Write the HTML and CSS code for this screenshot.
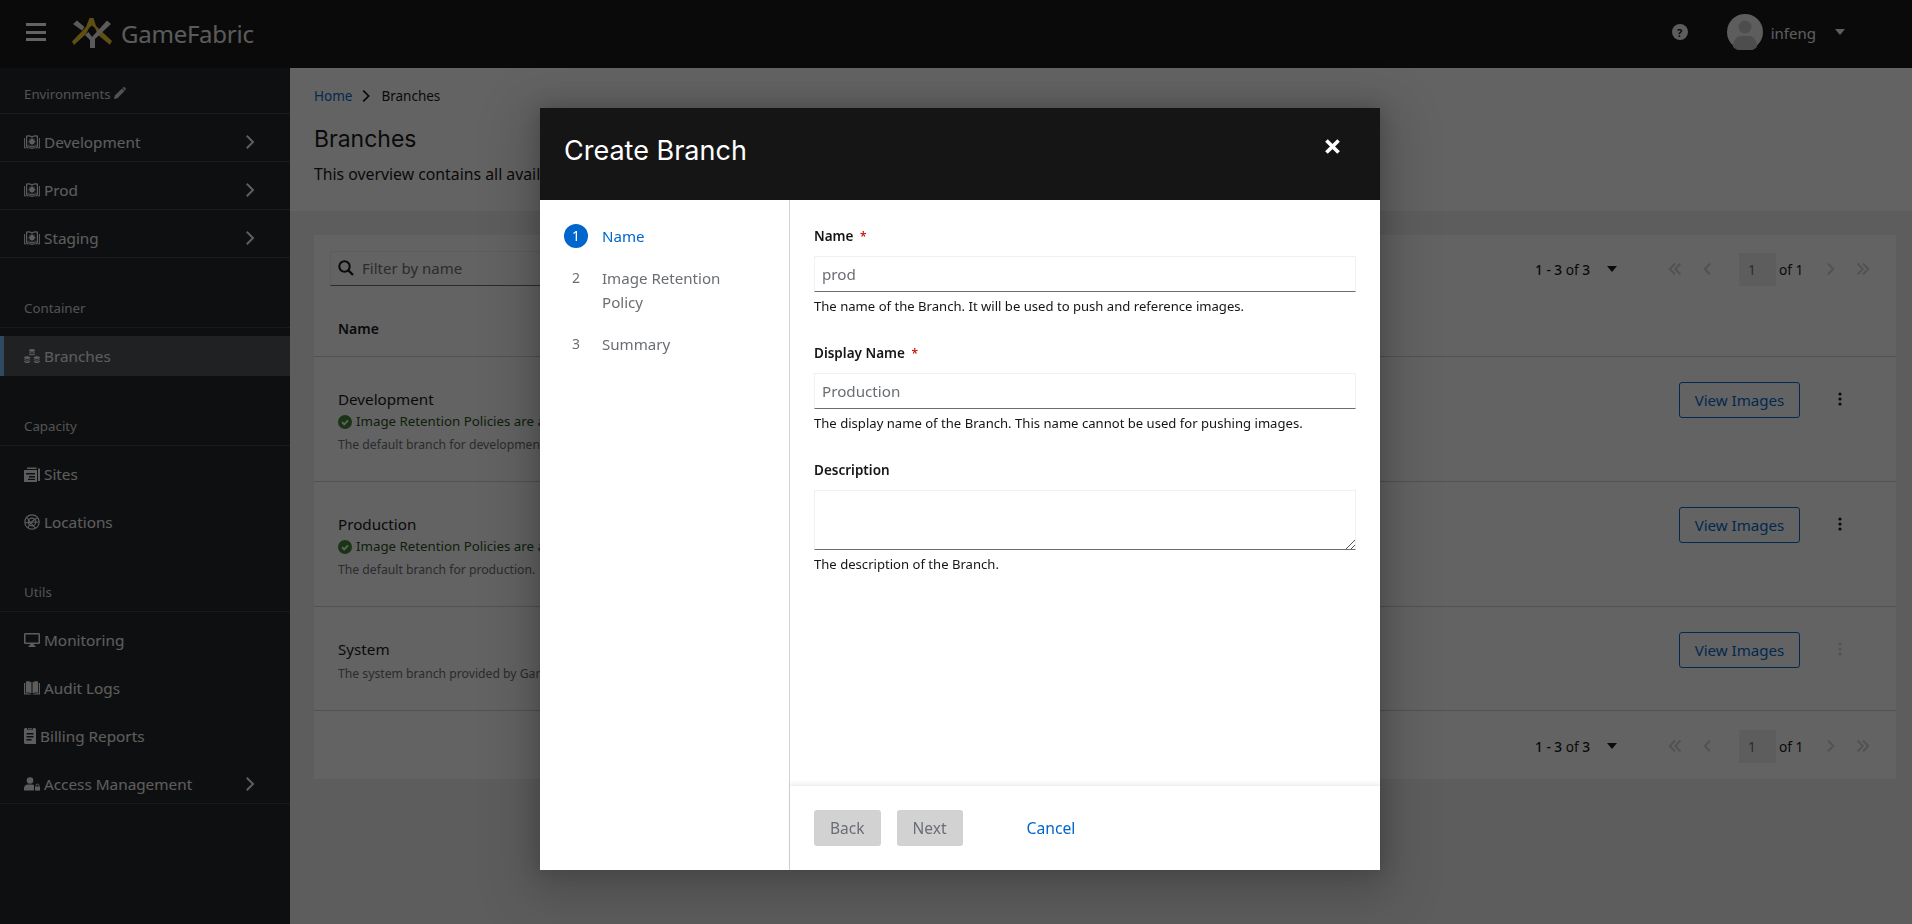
FILE: index.html
```html
<!DOCTYPE html>
<html lang="en">
<head>
<meta charset="utf-8">
<title>Branches - GameFabric</title>
<link rel="stylesheet" href="styles.css">
</head>
<body>
<svg class="defs" width="0" height="0" aria-hidden="true">
  <symbol id="i-env" viewBox="0 0 16 14">
    <path fill="none" stroke="currentColor" stroke-width="1.2" d="M2.6 1.2c1.8-.5 3.8-.3 5.4.9 1.6-1.2 3.6-1.4 5.4-.9v10c-1.8-.4-3.8-.2-5.4.8-1.6-1-3.6-1.2-5.4-.8z"/>
    <path fill="none" stroke="currentColor" stroke-width="1" d="M.6 3v10c2.5-.5 5-.3 7.4.4 2.4-.7 4.9-.9 7.4-.4V3"/>
    <circle cx="8" cy="6.6" r="2.6" fill="currentColor"/>
    <path stroke="currentColor" stroke-width="1" d="M8 2.8v7.600M4.400 6.600h7.200M5.400 4l5.200 5.200M10.600 4L5.400 9.200"/>
  </symbol>
  <symbol id="i-cubes" viewBox="0 0 16 14">
    <path fill="currentColor" d="M8 0c1.700 0 3 .6 3 1.300v3.600C11 5.600 9.700 6.200 8 6.200S5 5.600 5 4.900V1.300C5 .6 6.300 0 8 0zM3.200 7.200c1.700 0 3 .6 3 1.300v3.900c0 .9-1.300 1.500-3 1.500s-3-.6-3-1.500V8.500c0-.7 1.300-1.300 3-1.300zM12.800 7.200c1.700 0 3 .6 3 1.300v3.900c0 .9-1.300 1.500-3 1.500s-3-.6-3-1.500V8.500c0-.7 1.300-1.300 3-1.300z"/>
    <path fill="none" stroke="#212427" stroke-width=".7" d="M5 2.500c1.500 1 4.500 1 6 0M5 4c1.500 1 4.500 1 6 0M.2 9.700c1.500 1 4.500 1 6 0M.2 11.300c1.500 1 4.500 1 6 0M9.800 9.700c1.500 1 4.500 1 6 0M9.800 11.300c1.500 1 4.500 1 6 0"/>
  </symbol>
  <symbol id="i-sites" viewBox="0 0 16 16">
    <path fill="currentColor" d="M3 1.500h9.500V3H3zM14 2.500h2V15h-2zM0 4h13v12H0zM2 7v1.500h9V7zm3 3v1.500h6V10zm-1 2.700v1.300h7v-1.300z" fill-rule="evenodd"/>
  </symbol>
  <symbol id="i-loc" viewBox="0 0 16 16">
    <g fill="none" stroke="currentColor" stroke-width="1.200"><circle cx="8" cy="8" r="7.200"/><circle cx="8" cy="8" r="3.800"/><path d="M3 3.500c2 3 6 8.500 9 11M13.500 4C11 5 6 8 4 14M1 9c4-1 9-1 13.800-1"/></g>
  </symbol>
  <symbol id="i-desktop" viewBox="0 0 16 14">
    <path fill="currentColor" fill-rule="evenodd" d="M1.300 0h13.400c.7 0 1.300.6 1.300 1.300v8.400c0 .7-.6 1.300-1.300 1.300h-5l.4 1.500h1.400v1.500H4.500v-1.500h1.400l.4-1.500h-5C.6 11 0 10.400 0 9.700V1.300C0 .6.600 0 1.300 0zM1.500 1.500v8h13v-8z"/>
  </symbol>
  <symbol id="i-book" viewBox="0 0 16 14">
    <path fill="currentColor" d="M2 .3c2-.4 4.300-.1 5.500 1v11.200c-1.400-.9-3.500-1.100-5.500-.8zM14 .3c-2-.4-4.300-.1-5.500 1v11.200c1.400-.9 3.500-1.100 5.500-.8zM0 2h1.200v10.500c2-.3 4-.2 6 .7v.3H0zM16 2h-1.200v10.500c-2-.3-4-.2-6 .7v.3H16z"/>
  </symbol>
  <symbol id="i-file" viewBox="0 0 12 16">
    <path fill="currentColor" fill-rule="evenodd" d="M0 1.500C0 .7.700 0 1.500 0H3v1.500h6V0h1.500c.8 0 1.500.7 1.500 1.500V16H1.500C.7 16 0 15.300 0 14.500zM2.500 5v1.400h7V5zm0 3v1.400h7V8zm0 3v1.400h5V11zM4 0h4v.8H4z"/>
  </symbol>
  <symbol id="i-user" viewBox="0 0 16 14">
    <circle cx="6" cy="3.500" r="3.300" fill="currentColor"/>
    <path fill="currentColor" d="M0 13.600v-2C0 9 1.800 7.500 4 7.500h4c1 0 1.600.2 2 .5v5.600z"/>
    <path fill="currentColor" d="M11 9.500h5v4.100h-5z"/>
    <path fill="none" stroke="currentColor" stroke-width="1" d="M12.100 9.500V8.300c0-1.600 2.800-1.600 2.800 0v1.200"/>
  </symbol>
  <symbol id="i-angle" viewBox="0 0 10 16">
    <path fill="none" stroke="currentColor" stroke-width="2" stroke-linecap="square" d="M2.500 2.500L8 8l-5.500 5.500"/>
  </symbol>
  <symbol id="i-kebab" viewBox="0 0 4 14">
    <circle cx="2" cy="2" r="1.600" fill="currentColor"/><circle cx="2" cy="7" r="1.600" fill="currentColor"/><circle cx="2" cy="12" r="1.600" fill="currentColor"/>
  </symbol>
  <symbol id="i-first" viewBox="0 0 14 14">
    <path fill="none" stroke="currentColor" stroke-width="2" d="M7 1.500L1.800 7 7 12.500M12.500 1.500L7.300 7l5.200 5.500"/>
  </symbol>
  <symbol id="i-prev" viewBox="0 0 14 14">
    <path fill="none" stroke="currentColor" stroke-width="2" d="M10 1.500L4.800 7l5.200 5.500"/>
  </symbol>
  <symbol id="i-next" viewBox="0 0 14 14">
    <path fill="none" stroke="currentColor" stroke-width="2" d="M4 1.500L9.200 7 4 12.500"/>
  </symbol>
  <symbol id="i-last" viewBox="0 0 14 14">
    <path fill="none" stroke="currentColor" stroke-width="2" d="M1.500 1.500L6.700 7l-5.200 5.500M7 1.500L12.200 7 7 12.500"/>
  </symbol>
  <symbol id="i-check" viewBox="0 0 14 14">
    <circle cx="7" cy="7" r="7" fill="currentColor"/>
    <path fill="none" stroke="#fff" stroke-width="1.800" d="M4 7.200l2.200 2.200L10 5.300"/>
  </symbol>
</svg>

<div class="app">
  <header class="masthead">
    <button class="burger" aria-label="Menu"><span></span><span></span><span></span></button>
    <svg class="logo" viewBox="0 0 40 30" aria-hidden="true">
      <path fill="#f2ca30" d="M17.500 0h4l2.500 8L40 23l-2.200 3.800L26 17l-3-7-3-2.500-3 2.500-3 6L2 27 0 23.500 14 9z"/>
      <path fill="#e6e6e6" d="M1 6l4-3.500L12.500 9 10 12.500zM13 17l3.500-3 3.500 5L35 2.500 39 6 23 21v9h-5v-8z"/>
    </svg>
    <span class="brand">GameFabric</span>
    <div class="masthead-right">
      <span class="help">?</span>
      <svg class="avatar" viewBox="0 0 36 36" aria-hidden="true">
        <circle cx="18" cy="18" r="18" fill="#f0f0f0"/>
        <circle cx="18" cy="13" r="6.500" fill="#c4c4c4"/>
        <path fill="#c4c4c4" d="M6 33c0-7 4-11 8-11h8c4 0 8 4 8 11a18 18 0 0 1-24 0z"/>
      </svg>
      <span class="username">infeng</span>
      <span class="caret caret-light"></span>
    </div>
  </header>

  <div class="body-row">
    <nav class="sidebar">
      <div class="nav-title nav-title-first">Environments <svg class="pencil" viewBox="0 0 12 12" aria-hidden="true"><path fill="currentColor" d="M0 12l.8-3.400L8 1.400l2.600 2.600-7.200 7.200zM8.800.6c.7-.7 1.500-.7 2.200 0l.4.400c.7.700.7 1.500 0 2.200l-.3.300-2.600-2.600z"/></svg></div>
      <a class="nav-item"><svg class="ni"><use href="#i-env"/></svg>Development<svg class="chev"><use href="#i-angle"/></svg></a>
      <a class="nav-item"><svg class="ni"><use href="#i-env"/></svg>Prod<svg class="chev"><use href="#i-angle"/></svg></a>
      <a class="nav-item"><svg class="ni"><use href="#i-env"/></svg>Staging<svg class="chev"><use href="#i-angle"/></svg></a>

      <div class="nav-title">Container</div>
      <a class="nav-item nav-item-active"><svg class="ni"><use href="#i-cubes"/></svg>Branches</a>

      <div class="nav-title">Capacity</div>
      <a class="nav-item nav-item-plain"><svg class="ni"><use href="#i-sites"/></svg>Sites</a>
      <a class="nav-item nav-item-plain"><svg class="ni"><use href="#i-loc"/></svg>Locations</a>

      <div class="nav-title">Utils</div>
      <a class="nav-item nav-item-plain"><svg class="ni"><use href="#i-desktop"/></svg>Monitoring</a>
      <a class="nav-item nav-item-plain"><svg class="ni"><use href="#i-book"/></svg>Audit Logs</a>
      <a class="nav-item nav-item-plain"><svg class="ni ni-file"><use href="#i-file"/></svg>Billing Reports</a>
      <a class="nav-item"><svg class="ni"><use href="#i-user"/></svg>Access Management<svg class="chev"><use href="#i-angle"/></svg></a>
    </nav>

    <main class="main">
      <section class="page-head">
        <div class="crumbs"><a class="crumb-link">Home</a><svg class="crumb-sep"><use href="#i-angle"/></svg><span>Branches</span></div>
        <h1 class="page-title">Branches</h1>
        <p class="page-desc">This overview contains all available branches.</p>
      </section>
      <section class="page-body">
        <div class="card">
          <div class="toolbar">
            <div class="filter">
              <svg class="search" viewBox="0 0 16 16" aria-hidden="true"><circle cx="6.500" cy="6.500" r="5.200" fill="none" stroke="currentColor" stroke-width="2"/><path stroke="currentColor" stroke-width="2.400" d="M10.500 10.500L15 15"/></svg>
              <span>Filter by name</span>
            </div>
            <div class="pager">
              <span class="pager-count"><b>1 - 3</b> of <b>3</b></span><span class="caret caret-dark"></span>
              <svg class="pg pg-first"><use href="#i-first"/></svg><svg class="pg"><use href="#i-prev"/></svg>
              <span class="pg-input">1</span><span class="pg-of">of 1</span>
              <svg class="pg pg-next"><use href="#i-next"/></svg><svg class="pg"><use href="#i-last"/></svg>
            </div>
          </div>
          <div class="thead">Name</div>
          <div class="row">
            <div class="row-info">
              <div class="row-name">Development</div>
              <div class="row-status"><svg class="ok"><use href="#i-check"/></svg>Image Retention Policies are active.</div>
              <div class="row-desc">The default branch for development.</div>
            </div>
            <a class="btn-outline">View Images</a>
            <svg class="kebab"><use href="#i-kebab"/></svg>
          </div>
          <div class="row">
            <div class="row-info">
              <div class="row-name">Production</div>
              <div class="row-status"><svg class="ok"><use href="#i-check"/></svg>Image Retention Policies are active.</div>
              <div class="row-desc">The default branch for production.</div>
            </div>
            <a class="btn-outline">View Images</a>
            <svg class="kebab"><use href="#i-kebab"/></svg>
          </div>
          <div class="row row-short">
            <div class="row-info">
              <div class="row-name">System</div>
              <div class="row-desc">The system branch provided by GameFabric.</div>
            </div>
            <a class="btn-outline">View Images</a>
            <svg class="kebab kebab-off"><use href="#i-kebab"/></svg>
          </div>
          <div class="toolbar toolbar-foot">
            <div class="pager">
              <span class="pager-count"><b>1 - 3</b> of <b>3</b></span><span class="caret caret-dark"></span>
              <svg class="pg pg-first"><use href="#i-first"/></svg><svg class="pg"><use href="#i-prev"/></svg>
              <span class="pg-input">1</span><span class="pg-of">of 1</span>
              <svg class="pg pg-next"><use href="#i-next"/></svg><svg class="pg"><use href="#i-last"/></svg>
            </div>
          </div>
        </div>
      </section>
    </main>
  </div>
</div>

<div class="backdrop">
  <div class="modal">
    <div class="modal-head">
      <h2 class="modal-title">Create Branch</h2>
      <svg class="modal-close" viewBox="0 0 14 14" aria-label="Close"><path stroke="#fff" stroke-width="3" d="M2 2l10 10M12 2L2 12"/></svg>
    </div>
    <div class="modal-body">
      <ol class="steps">
        <li class="step step-on"><span class="step-num">1</span><span class="step-label">Name</span></li>
        <li class="step"><span class="step-num">2</span><span class="step-label">Image Retention Policy</span></li>
        <li class="step"><span class="step-num">3</span><span class="step-label">Summary</span></li>
      </ol>
      <div class="wizard">
        <form class="form">
          <div class="field">
            <div class="label">Name <span class="req">*</span></div>
            <div class="input">prod</div>
            <div class="help-text">The name of the Branch. It will be used to push and reference images.</div>
          </div>
          <div class="field">
            <div class="label">Display Name <span class="req">*</span></div>
            <div class="input input-ph">Production</div>
            <div class="help-text">The display name of the Branch. This name cannot be used for pushing images.</div>
          </div>
          <div class="field">
            <div class="label">Description</div>
            <div class="input textarea"><svg class="grip" viewBox="0 0 10 10" aria-hidden="true"><path stroke="#555" stroke-width="1" d="M1 10L10 1M6 10l4-4"/></svg></div>
            <div class="help-text">The description of the Branch.</div>
          </div>
        </form>
        <div class="wizard-foot">
          <span class="btn-off">Back</span>
          <span class="btn-off">Next</span>
          <a class="btn-link">Cancel</a>
        </div>
      </div>
    </div>
  </div>
</div>
</body>
</html>
```
FILE: styles.css
```css
* { box-sizing: border-box; }
html, body { margin: 0; height: 100%; overflow: hidden; }
body { font-family: "Noto Sans", sans-serif; font-size: 14px; color: #151515; background: #f0f0f0; }
.defs { position: absolute; }

.app { height: 924px; display: flex; flex-direction: column; }
.masthead { height: 68px; flex: none; background: #151515; display: flex; align-items: center; color: #fff; padding-left: 26px; }
.burger { width: 20px; height: 18px; padding: 0; border: 0; background: none; display: flex; flex-direction: column; justify-content: space-between; margin-top: -4px; }
.burger span { display: block; height: 3px; background: #fff; }
.logo { width: 40px; height: 30px; margin-left: 26px; margin-top: -2px; }
.brand { font-family: "Noto Sans", sans-serif; font-size: 24px; color: #e8e8e8; margin-left: 9px; letter-spacing: -.25px; margin-top: -1px; }
.masthead-right { margin-left: auto; display: flex; align-items: center; margin-top: -4px; }
.help { width: 16px; height: 16px; border-radius: 50%; background: #f0f0f0; color: #151515; font-size: 11px; font-weight: 700; display: flex; align-items: center; justify-content: center; }
.avatar { width: 36px; height: 36px; margin-left: 39px; }
.username { margin-left: 8px; font-size: 15px; color: #f0f0f0; margin-top: 1px; }
.caret { display: inline-block; width: 0; height: 0; border-left: 5.500px solid transparent; border-right: 5.500px solid transparent; border-top: 6px solid; }
.caret-light { color: #f0f0f0; margin-left: 19px; margin-right: 67px; }

.body-row { flex: 1; display: flex; min-height: 0; }
.sidebar { width: 290px; flex: none; background: #212427; color: #f0f0f0; }
.nav-title { height: 70px; padding: 40px 0 0 24px; font-size: 13.300px; color: #d2d2d2; line-height: 20px; border-bottom: 1px solid #3c3f42; }
.nav-title-first { height: 46px; padding-top: 16px; }
.pencil { width: 12px; height: 12px; }
.nav-item { height: 48px; display: flex; align-items: center; padding: 8px 0 0 24px; font-size: 15.300px; border-bottom: 1px solid #3c3f42; }
.nav-item-plain { border-bottom-color: transparent; }
.nav-item-active { height: 40px; padding-top: 0; margin-top: 8px; background: #4f5255; border-bottom: 0; box-shadow: inset 4px 0 0 #73bcf7; }
.ni { width: 16px; height: 16px; margin-right: 4px; flex: none; }
.ni-file { width: 12px; }
.chev { width: 10px; height: 16px; margin-left: auto; margin-right: 35px; }

.main { flex: 1; min-width: 0; display: flex; flex-direction: column; }
.page-head { height: 143px; flex: none; background: #fff; padding: 18px 24px 0; }
.crumbs { display: flex; align-items: center; font-size: 13.500px; line-height: 20px; }
.crumb-link { color: #06c; }
.crumb-sep { width: 10px; height: 14px; margin: 0 10px 0 9px; }
.page-title { margin: 17px 0 0; font-family: "Inter", sans-serif; font-weight: 400; font-size: 23px; line-height: 32px; }
.page-desc { margin: 7px 0 0; font-size: 15.800px; line-height: 24px; }
.page-body { flex: 1; padding: 24px 16px 0 24px; }
.card { background: #fff; }
.toolbar { height: 68px; padding-top: 16px; display: flex; justify-content: space-between; align-items: flex-start; }
.filter { width: 300px; height: 35px; margin-left: 16px; border: 1px solid #f0f0f0; border-bottom-color: #6a6e73; display: flex; align-items: center; gap: 8px; padding: 0 0 1px 7px; color: #6a6e73; font-size: 15px; }
.search { width: 16px; height: 16px; color: #151515; }
.pager { display: flex; align-items: center; height: 34px; width: 361px; font-size: 13.700px; margin-top: 1px; }
.pager-count { width: 72px; font-size: 13.700px; }
.pager-count b { font-weight: 500; }
.caret-dark { color: #151515; }
.pg { width: 14px; height: 14px; color: #d2d2d2; margin-left: 18px; }
.pg-first { margin-left: 51px; }
.pg-input { width: 37px; height: 33px; background: #f0f0f0; color: #6a6e73; margin-left: 25px; display: flex; align-items: center; padding-left: 9px; }
.pg-of { margin-left: 3px; width: 30px; }
.pg-next { margin-left: 15px; }
.thead { height: 54px; padding: 16px 24px 0; font-weight: 600; font-size: 14px; line-height: 20px; border-bottom: 1px solid #d2d2d2; }
.row { height: 125px; display: flex; align-items: flex-start; padding: 25px 54px 0 24px; border-bottom: 1px solid #d2d2d2; }
.row-short { height: 104px; }
.row-info { flex: 1; min-width: 0; padding-top: 5px; }
.row-name { font-size: 15.200px; line-height: 24px; }
.row-status { font-size: 13.300px; line-height: 21px; color: #1e4f18; display: flex; align-items: center; gap: 4px; }
.row-desc { font-size: 12.200px; line-height: 24px; margin-top: 1px; color: #6a6e73; }
.ok { width: 14px; height: 14px; color: #3e8635; }
.btn-outline { width: 121px; height: 36px; border: 1px solid #06c; border-radius: 3px; color: #06c; display: flex; align-items: center; justify-content: center; font-size: 15.100px; }
.kebab { width: 4px; height: 14px; margin: 10px 0 0 38px; color: #151515; }
.kebab-off { color: #d2d2d2; }
.toolbar-foot { justify-content: flex-end; padding-top: 17px; }

.backdrop { position: fixed; inset: 0; background: rgba(3, 3, 3, .62); padding: 108px 0 54px 8px; display: flex; justify-content: center; }
.modal { width: 840px; background: #fff; display: flex; flex-direction: column; box-shadow: 0 16px 48px 16px rgba(3, 3, 3, .16), 0 0 20px rgba(3, 3, 3, .2); }
.modal-head { height: 92px; flex: none; background: #151515; color: #fff; display: flex; align-items: center; padding: 0 39px 0 24px; justify-content: space-between; }
.modal-title { margin: -7px 0 0; font-family: "Inter", sans-serif; font-weight: 400; font-size: 27px; }
.modal-close { width: 17px; height: 17px; margin-top: -15px; }
.modal-body { flex: 1; display: flex; min-height: 0; }
.steps { width: 250px; flex: none; margin: 0; padding: 24px 24px 0; list-style: none; border-right: 1px solid #d2d2d2; }
.step { display: flex; color: #6a6e73; font-size: 15.100px; line-height: 24px; margin-bottom: 18px; }
.step-num { width: 24px; height: 24px; border-radius: 50%; flex: none; display: flex; align-items: center; justify-content: center; font-size: 14px; margin-right: 14px; }
.step-on { color: #06c; }
.step-on .step-num { background: #06c; color: #fff; }
.wizard { flex: 1; display: flex; flex-direction: column; min-width: 0; }
.form { flex: 1; padding: 24px 24px 0; }
.field { margin-bottom: 24px; }
.label { height: 24px; font-size: 13.500px; font-weight: 600; line-height: 24px; color: #151515; margin-bottom: 8px; }
.req { color: #c9190b; margin-left: 3px; font-size: 12px; }
.input { height: 36px; border: 1px solid #f0f0f0; border-bottom-color: #6a6e73; padding: 0 7px; display: flex; align-items: center; font-size: 15.200px; color: #6a6e73; }
.input-ph { color: #6a6e73; }
.textarea { height: 60px; position: relative; }
.grip { width: 10px; height: 10px; position: absolute; right: 0; bottom: 0; }
.help-text { font-size: 13.100px; line-height: 21px; color: #151515; margin-top: 4px; }
.wizard-foot { height: 85px; flex: none; border-top: 1px solid #f0f0f0; box-shadow: 0 -2px 4px rgba(3, 3, 3, .06); display: flex; align-items: center; padding: 0 24px; gap: 16px; }
.btn-off { height: 36px; padding: 0 16px; background: #d2d2d2; color: #6a6e73; border-radius: 3px; display: flex; align-items: center; font-size: 15.500px; }
.btn-link { margin-left: 48px; color: #06c; font-size: 15.700px; }
```
